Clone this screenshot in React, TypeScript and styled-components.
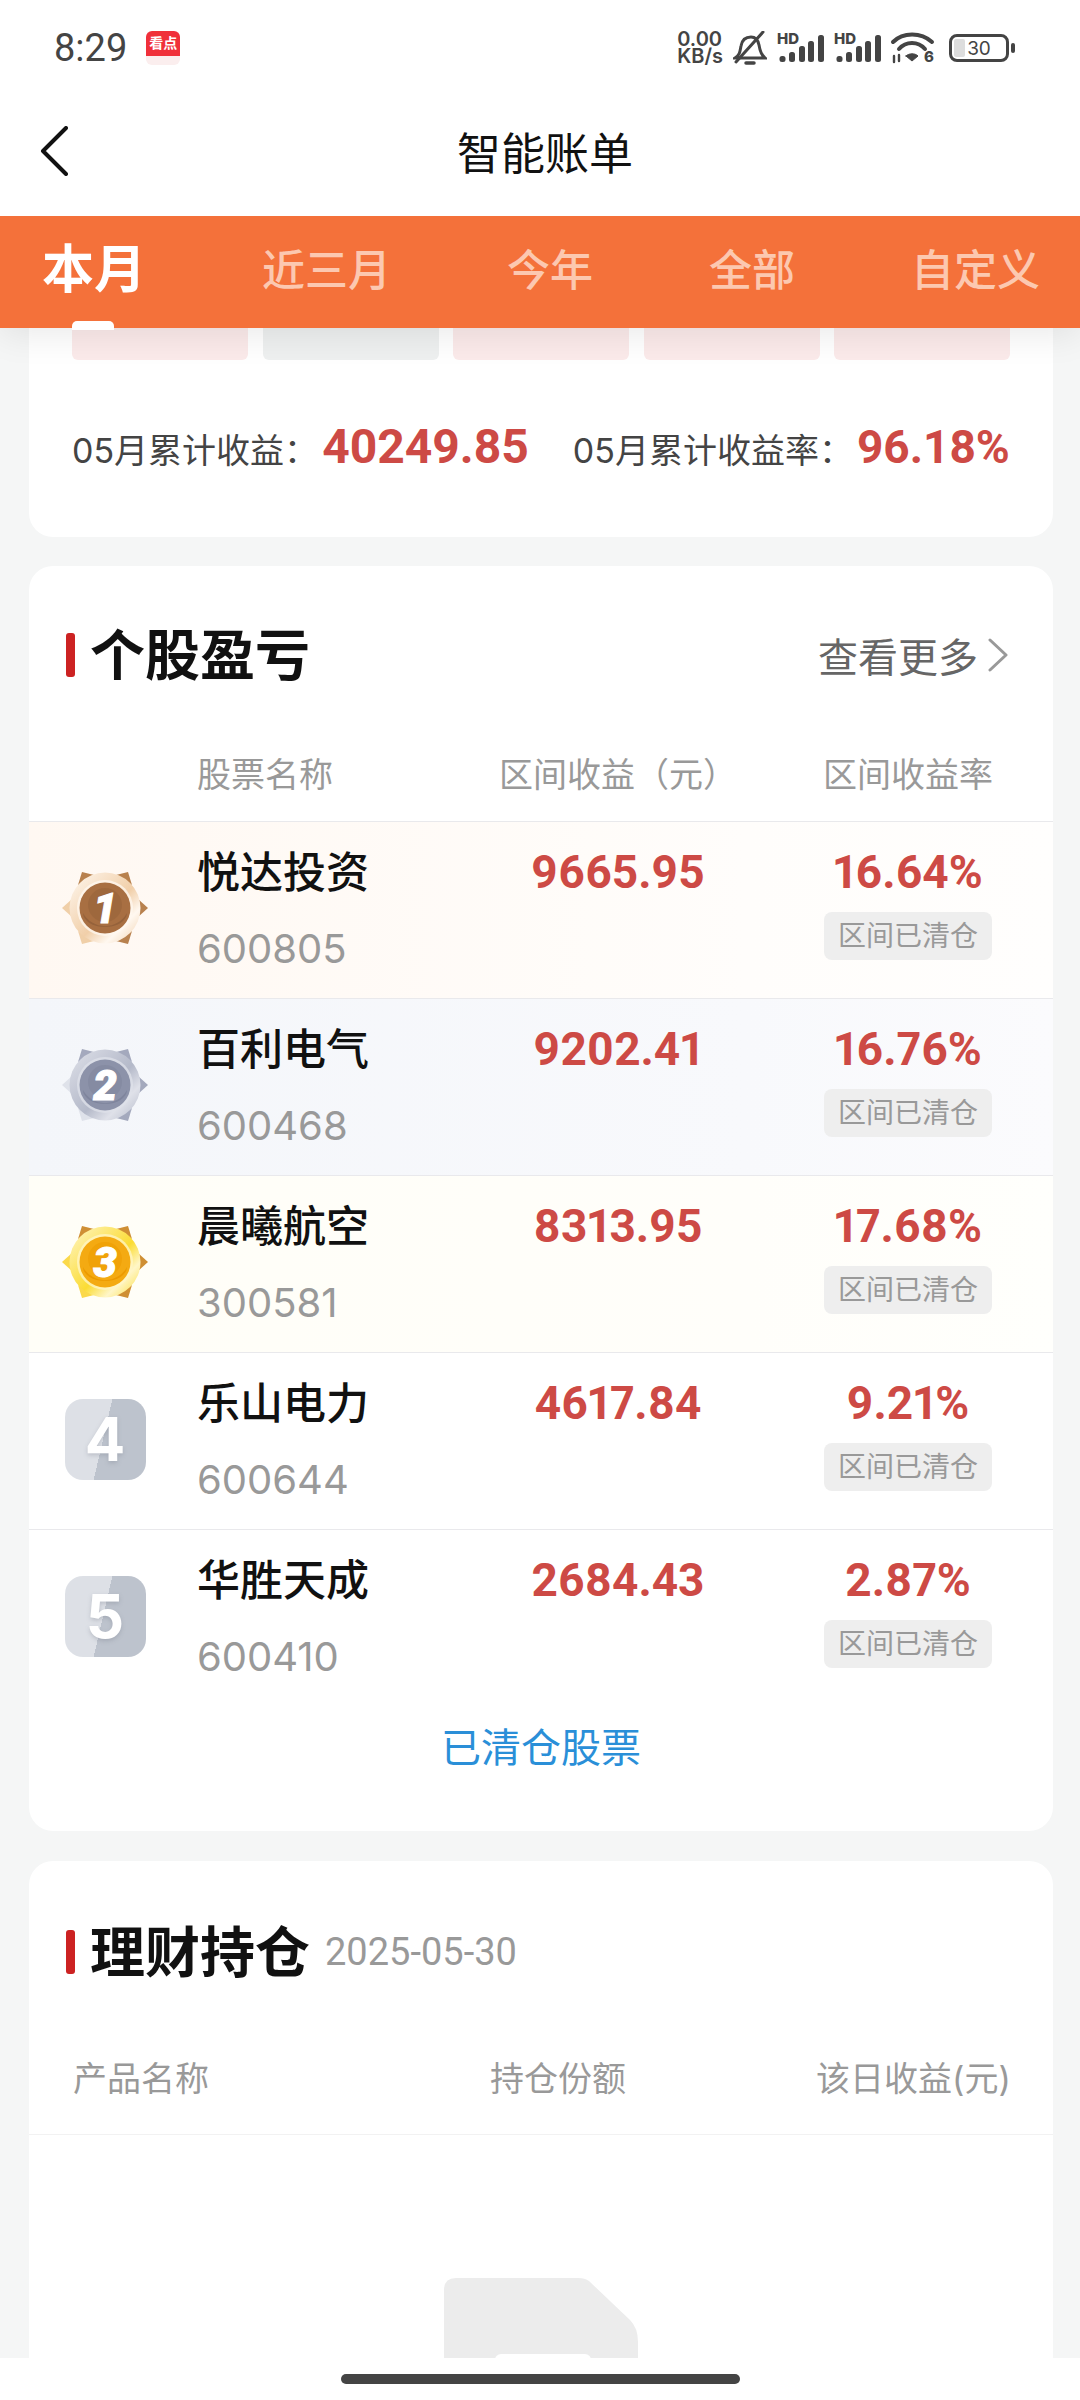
import styled, { createGlobalStyle } from 'styled-components'

const GlobalStyle = createGlobalStyle`
  html, body {
    margin: 0;
    padding: 0;
    background: #f5f6f6;
  }
  * {
    box-sizing: border-box;
  }
`

const TABS = ['本月', '近三月', '今年', '全部', '自定义']
const STUBS = ['#fbeaea', '#eef0f0', '#fbeaea', '#fbeaea', '#fbeaea']

const STOCKS = [
  { name: '悦达投资', code: '600805', profit: '9665.95', rate: '16.64%', bg: 'linear-gradient(90deg, #fff8f2, #fffdfb 70%, #fffefd)' },
  { name: '百利电气', code: '600468', profit: '9202.41', rate: '16.76%', bg: 'linear-gradient(90deg, #f4f6fa, #f8f9fc 70%, #fbfbfd)' },
  { name: '晨曦航空', code: '300581', profit: '8313.95', rate: '17.68%', bg: 'linear-gradient(90deg, #fffef7, #fffefa 70%, #fffffc)' },
  { name: '乐山电力', code: '600644', profit: '4617.84', rate: '9.21%', bg: '#fff' },
  { name: '华胜天成', code: '600410', profit: '2684.43', rate: '2.87%', bg: '#fff' },
]

const MEDALS = [
  { spikeA: '#b8814e', spikeB: '#f0cfa8', ringA: '#fff8f0', ringB: '#f1cfa9', disc: '#a86f42', glow: '#95623b' },
  { spikeA: '#a4a9bd', spikeB: '#dfe2ea', ringA: '#dfe1e9', ringB: '#b4b9c9', disc: '#8c92a9', glow: '#7f859d' },
  { spikeA: '#cf8f34', spikeB: '#fbd94a', ringA: '#fff6c8', ringB: '#fbdc34', disc: '#f4aa12', glow: '#ec9a00' },
]

function Medal({ rank }: { rank: number }) {
  const m = MEDALS[rank - 1]
  const id = `medal-${rank}`
  return (
    <svg width="86" height="74" viewBox="0 0 86 74">
      <defs>
        <linearGradient id={id} x1="0" y1="0" x2="1" y2="1">
          <stop offset="0" stopColor={m.ringA} />
          <stop offset="0.55" stopColor={m.ringB} />
          <stop offset="0.75" stopColor={m.ringA} />
          <stop offset="1" stopColor={m.ringB} />
        </linearGradient>
      </defs>
      <path d="M0 37 L10 28 L10 46 Z" fill={m.spikeB} />
      <path d="M86 37 L76 28 L76 46 Z" fill={m.spikeA} />
      <path d="M20 1 L32 4 L16 14 Z" fill={m.spikeA} />
      <path d="M66 1 L54 4 L70 14 Z" fill={m.spikeA} />
      <path d="M20 73 L32 70 L16 60 Z" fill={m.spikeB} />
      <path d="M66 73 L54 70 L70 60 Z" fill={m.spikeA} />
      <circle cx="43" cy="37" r="35.5" fill={`url(#${id})`} />
      <circle cx="43" cy="37" r="28" fill={m.ringA} opacity="0.75" />
      <circle cx="43" cy="37" r="25.5" fill={m.disc} />
      <path d="M21 42 A22 14 0 0 0 65 42 A25 25 0 0 1 21 42 Z" fill={m.glow} />
      <circle cx="43" cy="34" r="17" fill={m.glow} opacity="0.55" />
      <MedalDigit x="43" y="52" textAnchor="middle">
        {rank}
      </MedalDigit>
    </svg>
  )
}

function SignalIcon() {
  return (
    <svg width="47" height="30" viewBox="0 0 47 30" overflow="visible">
      <SmallGlyph x="0" y="11" fontSize="15">
        HD
      </SmallGlyph>
      <rect x="2.5" y="23" width="6" height="6" rx="2.5" fill="#444" />
      <rect x="12" y="19" width="6" height="10" rx="2.5" fill="#444" />
      <rect x="22" y="13" width="6" height="16" rx="2.5" fill="#444" />
      <rect x="31" y="8" width="6" height="21" rx="2.5" fill="#444" />
      <rect x="41" y="2" width="6" height="27" rx="2.5" fill="#444" />
    </svg>
  )
}

export default function App() {
  return (
    <>
      <GlobalStyle />
      <Screen>
        <StatusBar>
          <StatusLeft>
            <Time>8:29</Time>
            <AppBadge>
              <AppBadgeTop>看点</AppBadgeTop>
              <AppBadgeBottom />
            </AppBadge>
          </StatusLeft>
          <StatusRight>
            <NetSpeed>
              <span>0.00</span>
              <span>KB/s</span>
            </NetSpeed>
            <svg width="34" height="35" viewBox="0 0 34 35" fill="none" stroke="#444" strokeWidth="3" strokeLinecap="round">
              <path d="M2 27 C7 24 7 20 8 15 C9 9 13 6 18 6 C23 6 25 9 26 14 C27 20 28 24 32 27 Z" />
              <path d="M3 31 L30 1" />
              <path d="M13 32 H21" strokeWidth="3.5" />
            </svg>
            <SignalIcon />
            <SignalIcon />
            <svg width="43" height="30" viewBox="0 0 43 30" fill="none" stroke="#444" strokeLinecap="round" overflow="visible">
              <path d="M2 9 C12 -1 30 -1 41 9" strokeWidth="4" />
              <path d="M8 16 C15 8 27 8 34 16" strokeWidth="4" />
              <path d="M15 23 L21 28 L27 23 C24 20 18 20 15 23 Z" fill="#444" strokeWidth="1" />
              <path d="M3 23 V29 M8 22 V28" strokeWidth="2.4" />
              <SmallGlyph x="33" y="29" fontSize="15" stroke="none">
                6
              </SmallGlyph>
            </svg>
            <Battery>
              <BatteryBody>
                <BatteryFill />
                <BatteryLevel>30</BatteryLevel>
              </BatteryBody>
              <BatteryNub />
            </Battery>
          </StatusRight>
        </StatusBar>

        <NavBar>
          <svg width="28" height="50" viewBox="0 0 28 50" fill="none" stroke="#111" strokeWidth="4" strokeLinecap="round" strokeLinejoin="round">
            <path d="M26 2 L3 25 L26 48" />
          </svg>
          <NavTitle>智能账单</NavTitle>
        </NavBar>

        <TabBar>
          {TABS.map((tab, i) => (
            <Tab key={tab} $active={i === 0}>
              {tab}
              {i === 0 && <TabMark />}
            </Tab>
          ))}
        </TabBar>

        <Content>
          <SummaryCard>
            <StubRow>
              {STUBS.map((color, i) => (
                <Stub key={i} $color={color} />
              ))}
            </StubRow>
            <SummaryRow>
              <SummaryLabel>05月累计收益：</SummaryLabel>
              <SummaryValue $size={48}>40249.85</SummaryValue>
              <SummaryLabel $gap>05月累计收益率：</SummaryLabel>
              <SummaryValue $size={46}>96.18%</SummaryValue>
            </SummaryRow>
          </SummaryCard>

          <Card>
            <CardHead>
              <TitleGroup>
                <TitleMark />
                <CardTitle>个股盈亏</CardTitle>
              </TitleGroup>
              <MoreLink>
                查看更多
                <svg width="20" height="34" viewBox="0 0 20 34" fill="none" stroke="#999" strokeWidth="3" strokeLinecap="round" strokeLinejoin="round">
                  <path d="M2 2 L18 17 L2 32" />
                </svg>
              </MoreLink>
            </CardHead>
            <StockHeader>
              <span />
              <HeaderCell>股票名称</HeaderCell>
              <HeaderCell $center>区间收益（元）</HeaderCell>
              <HeaderCell $center>区间收益率</HeaderCell>
            </StockHeader>
            {STOCKS.map((s, i) => (
              <StockRow key={s.code} $bg={s.bg}>
                <RankCell>
                  {i < 3 ? <Medal rank={i + 1} /> : <RankBadge>{i + 1}</RankBadge>}
                </RankCell>
                <div>
                  <StockName>{s.name}</StockName>
                  <StockCode>{s.code}</StockCode>
                </div>
                <ProfitCell>{s.profit}</ProfitCell>
                <RateCell>
                  <RateValue>{s.rate}</RateValue>
                  <ClearTag>区间已清仓</ClearTag>
                </RateCell>
              </StockRow>
            ))}
            <ClearedLink>已清仓股票</ClearedLink>
          </Card>

          <Card>
            <FundHead>
              <TitleMark />
              <CardTitle>理财持仓</CardTitle>
              <FundDate>2025-05-30</FundDate>
            </FundHead>
            <FundHeader>
              <FundHeaderCell>产品名称</FundHeaderCell>
              <FundHeaderCell>持仓份额</FundHeaderCell>
              <FundHeaderCell>该日收益(元)</FundHeaderCell>
            </FundHeader>
            <EmptyState>
              <svg width="194" height="120" viewBox="0 0 194 120">
                <path d="M0 12 Q0 0 12 0 H134 Q141 0 145 3 L186 42 Q194 50 194 64 V120 H0 Z" fill="#ececec" />
                <rect x="51" y="76" width="96" height="44" rx="6" fill="#fff" />
              </svg>
            </EmptyState>
          </Card>
        </Content>

        <HomeBar>
          <HomeIndicator />
        </HomeBar>
      </Screen>
    </>
  )
}

const FONT = `Inter, 'Noto Sans CJK SC', sans-serif`
const NUMBER_FONT = `Roboto, 'Noto Sans CJK SC', sans-serif`
const RED = '#cd4a45'

const Screen = styled.div`
  width: 1080px;
  height: 2400px;
  display: flex;
  flex-direction: column;
  overflow: hidden;
  background: #f5f6f6;
  font-family: ${FONT};
`

const StatusBar = styled.div`
  height: 96px;
  flex: none;
  display: flex;
  justify-content: space-between;
  align-items: center;
  padding: 0 65px 0 54px;
  background: #fff;
`

const StatusLeft = styled.div`
  display: flex;
  align-items: center;
  gap: 19px;
`

const Time = styled.div`
  font-family: ${NUMBER_FONT};
  font-size: 38px;
  color: #444;
`

const AppBadge = styled.div`
  width: 34px;
  height: 34px;
  border-radius: 6px;
  overflow: hidden;
  display: flex;
  flex-direction: column;
`

const AppBadgeTop = styled.div`
  height: 25px;
  background: #f0303a;
  color: #fff;
  font-size: 14px;
  font-weight: 700;
  line-height: 24px;
  text-align: center;
  white-space: nowrap;
`

const AppBadgeBottom = styled.div`
  flex: 1;
  background: #fbeeee;
`

const StatusRight = styled.div`
  display: flex;
  align-items: center;
  gap: 10px;
`

const NetSpeed = styled.div`
  display: flex;
  flex-direction: column;
  font-size: 20px;
  font-weight: 600;
  line-height: 17px;
  color: #444;
`

const SmallGlyph = styled.text`
  font-family: ${FONT};
  font-weight: 800;
  fill: #444;
`

const Battery = styled.div`
  display: flex;
  align-items: center;
  gap: 2px;
  margin-left: 5px;
`

const BatteryBody = styled.div`
  position: relative;
  width: 60px;
  height: 28px;
  border: 3px solid #444;
  border-radius: 8px;
  padding: 2px;
`

const BatteryFill = styled.div`
  width: 11px;
  height: 100%;
  background: #ddd;
  border-radius: 2px;
`

const BatteryLevel = styled.div`
  position: absolute;
  inset: 0;
  display: flex;
  justify-content: center;
  align-items: center;
  font-size: 19px;
  color: #444;
`

const BatteryNub = styled.div`
  width: 4px;
  height: 10px;
  background: #444;
  border-radius: 2px;
`

const NavBar = styled.div`
  height: 120px;
  flex: none;
  display: flex;
  align-items: center;
  padding: 0 40px 10px;
  background: #fff;
`

const NavTitle = styled.div`
  margin-left: 389px;
  font-size: 44px;
  color: #111;
`

const TabBar = styled.div`
  height: 112px;
  flex: none;
  display: flex;
  justify-content: space-between;
  align-items: center;
  padding: 0 40px 4px 42px;
  background: #f4713a;
  box-shadow: 0 6px 34px rgba(0, 0, 0, 0.09);
  clip-path: inset(0 0 -70px 0);
  position: relative;
  z-index: 1;
`

const Tab = styled.div<{ $active?: boolean }>`
  position: relative;
  line-height: 60px;
  font-size: ${(p) => (p.$active ? '52px' : '43px')};
  font-weight: ${(p) => (p.$active ? 700 : 500)};
  color: ${(p) => (p.$active ? '#fff' : '#fcc8b0')};
`

const TabMark = styled.div`
  position: absolute;
  left: 30px;
  bottom: -30px;
  width: 42px;
  height: 9px;
  background: #fff;
  border-radius: 5px 5px 0 0;
`

const Content = styled.div`
  flex: 1;
  min-height: 0;
  overflow: hidden;
  display: flex;
  flex-direction: column;
  gap: 30px;
  padding: 0 27px 0 29px;
`

const Card = styled.div`
  flex: none;
  background: #fff;
  border-radius: 24px;
`

const SummaryCard = styled(Card)`
  height: 209px;
  margin-bottom: -1px;
  border-radius: 0 0 24px 24px;
`

const StubRow = styled.div`
  display: flex;
  gap: 14.5px;
  padding-left: 43px;
`

const Stub = styled.div<{ $color: string }>`
  width: 176px;
  height: 32px;
  background: ${(p) => p.$color};
  border-radius: 0 0 6px 6px;
`

const SummaryRow = styled.div`
  display: flex;
  align-items: baseline;
  padding: 58px 0 0 43px;
`

const SummaryLabel = styled.div<{ $gap?: boolean }>`
  font-size: 34px;
  color: #444;
  margin-left: ${(p) => (p.$gap ? '44px' : '0')};
`

const SummaryValue = styled.div<{ $size: number }>`
  margin-left: 4px;
  font-family: ${NUMBER_FONT};
  font-size: ${(p) => p.$size}px;
  font-weight: 700;
  color: ${RED};
`

const CardHead = styled.div`
  height: 170px;
  display: flex;
  justify-content: space-between;
  align-items: center;
  padding: 8px 45px 0 37px;
`

const TitleGroup = styled.div`
  display: flex;
  align-items: center;
`

const TitleMark = styled.div`
  width: 9px;
  height: 44px;
  background: #cc2222;
  border-radius: 3px;
`

const CardTitle = styled.div`
  margin: -8px 0 0 15px;
  font-size: 55px;
  font-weight: 700;
  color: #111;
`

const MoreLink = styled.div`
  display: flex;
  align-items: center;
  gap: 10px;
  font-size: 40px;
  color: #666;
`

const StockGrid = styled.div`
  display: grid;
  grid-template-columns: 168px 271px 300px 280px;
  align-items: start;
`

const StockHeader = styled(StockGrid)`
  height: 85px;
  align-items: center;
  padding-bottom: 12px;
`

const HeaderCell = styled.div<{ $center?: boolean }>`
  font-size: 34px;
  color: #999;
  text-align: ${(p) => (p.$center ? 'center' : 'left')};
`

const StockRow = styled(StockGrid)<{ $bg: string }>`
  height: 177px;
  padding-top: 20px;
  border-top: 1px solid #e9e9ec;
  background: ${(p) => p.$bg};
`

const RankCell = styled.div`
  height: 172px;
  display: flex;
  justify-content: center;
  align-items: center;
  padding-right: 16px;
  margin-top: -20px;
`

const RankBadge = styled.div`
  width: 81px;
  height: 81px;
  display: flex;
  justify-content: center;
  align-items: center;
  border-radius: 18px;
  background: linear-gradient(103deg, #dde0e6 47.5%, #bdc3cd 47.5%);
  color: #fff;
  font-size: 60px;
  font-weight: 700;
  text-shadow: 0 2px 4px rgba(120, 125, 140, 0.35);
`

const MedalDigit = styled.text`
  font-family: ${NUMBER_FONT};
  font-size: 42px;
  font-weight: 900;
  font-style: italic;
  fill: #fff;
  stroke: #fff;
  stroke-width: 1px;
`

const StockName = styled.div`
  font-size: 43px;
  font-weight: 500;
  line-height: 60px;
  color: #111;
`

const StockCode = styled.div`
  margin-top: 17px;
  font-size: 40px;
  line-height: 60px;
  color: #999;
`

const ProfitCell = styled.div`
  font-family: ${NUMBER_FONT};
  font-size: 46px;
  font-weight: 700;
  font-variant-numeric: proportional-nums;
  line-height: 60px;
  color: ${RED};
  text-align: center;
`

const RateCell = styled.div`
  display: flex;
  flex-direction: column;
  align-items: center;
`

const RateValue = styled.div`
  font-family: ${NUMBER_FONT};
  font-size: 46px;
  font-weight: 700;
  font-variant-numeric: proportional-nums;
  line-height: 60px;
  color: ${RED};
`

const ClearTag = styled.div`
  margin-top: 10px;
  padding: 0 14px;
  height: 48px;
  line-height: 48px;
  background: #eeeeee;
  border-radius: 8px;
  font-size: 28px;
  color: #999;
`

const ClearedLink = styled.div`
  height: 125px;
  padding-top: 12px;
  font-size: 40px;
  line-height: 60px;
  color: #2a8fd8;
  text-align: center;
`

const FundHead = styled.div`
  height: 172px;
  display: flex;
  align-items: center;
  padding: 10px 0 0 37px;
`

const FundDate = styled.div`
  margin-left: 15px;
  font-family: ${NUMBER_FONT};
  font-size: 38px;
  color: #999;
`

const FundHeader = styled.div`
  height: 102px;
  display: grid;
  grid-template-columns: 417px 326px 1fr;
  align-items: center;
  padding: 0 0 14px 44px;
  border-bottom: 1px solid #f2f2f2;
`

const FundHeaderCell = styled.div`
  font-size: 34px;
  color: #999;
`

const EmptyState = styled.div`
  display: flex;
  padding: 143px 0 0 415px;
`

const HomeBar = styled.div`
  height: 42px;
  flex: none;
  display: flex;
  justify-content: center;
  padding-top: 16px;
  background: #fff;
`

const HomeIndicator = styled.div`
  width: 399px;
  height: 10px;
  background: #444;
  border-radius: 5px;
`
